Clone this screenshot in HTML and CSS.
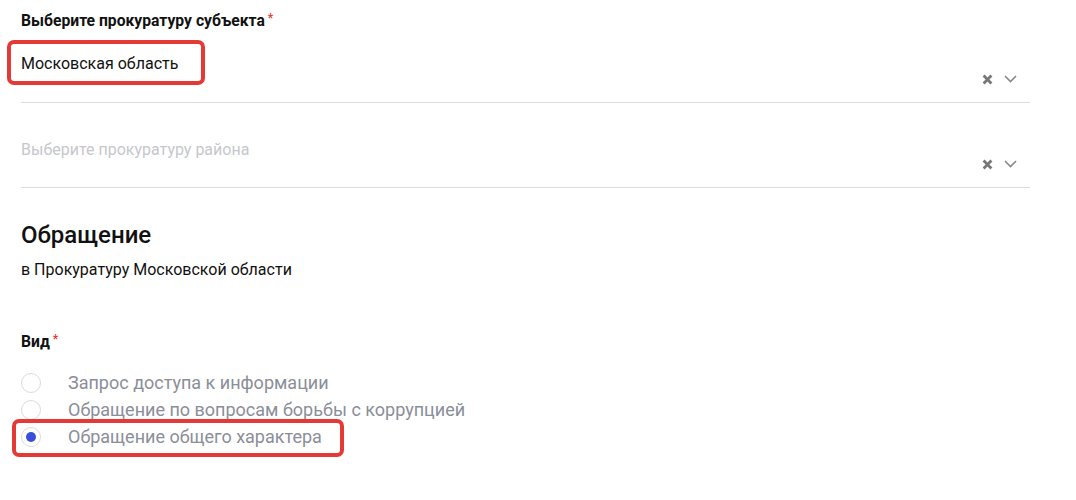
FILE: index.html
```html
<!DOCTYPE html>
<html lang="ru">
<head>
<meta charset="utf-8">
<link rel="stylesheet" href="styles.css">
</head>
<body>
<div class="form">
  <div class="label label-top">Выберите прокуратуру субъекта<span class="req">*</span></div>
  <div class="select select-first">
    <div class="select-value"><span class="value-text marked">Московская область</span></div>
    <div class="select-icons">
      <svg class="icon-clear" width="11" height="11" viewBox="0 0 11 11"><path d="M1.6 1.6 L9.4 9.4 M9.4 1.6 L1.6 9.4" stroke="#777" stroke-width="2.8" stroke-linecap="butt"/></svg>
      <svg class="icon-chevron" width="13" height="8" viewBox="0 0 13 8"><path d="M1 1 L6.5 6.5 L12 1" fill="none" stroke="#888" stroke-width="1.6"/></svg>
    </div>
  </div>
  <div class="select select-second">
    <div class="select-value"><span class="placeholder">Выберите прокуратуру района</span></div>
    <div class="select-icons">
      <svg class="icon-clear" width="11" height="11" viewBox="0 0 11 11"><path d="M1.6 1.6 L9.4 9.4 M9.4 1.6 L1.6 9.4" stroke="#777" stroke-width="2.8" stroke-linecap="butt"/></svg>
      <svg class="icon-chevron" width="13" height="8" viewBox="0 0 13 8"><path d="M1 1 L6.5 6.5 L12 1" fill="none" stroke="#888" stroke-width="1.6"/></svg>
    </div>
  </div>
  <h2 class="title">Обращение</h2>
  <p class="subtitle">в Прокуратуру Московской области</p>
  <div class="label label-kind">Вид<span class="req">*</span></div>
  <div class="radios">
    <div class="radio"><span class="circle"></span><span class="radio-text">Запрос доступа к информации</span></div>
    <div class="radio"><span class="circle"></span><span class="radio-text">Обращение по вопросам борьбы с коррупцией</span></div>
    <div class="radio radio-checked marked-row"><span class="circle"><span class="dot"></span></span><span class="radio-text">Обращение общего характера</span></div>
  </div>
</div>
</body>
</html>
```
FILE: styles.css
```css
*, *::before, *::after { box-sizing: border-box; }
html, body { margin: 0; padding: 0; background: #fff; }
body { font-family: Roboto, "Liberation Sans", Arial, sans-serif; color: #111; }

.form {
  width: 1030px;
  padding: 11px 0 43px 21px;
}

.label {
  font-size: 15.7px;
  line-height: 20px;
  font-weight: 700;
  color: #111;
  position: relative;
}
.req {
  color: #e53935;
  font-size: 12px;
  font-weight: 700;
  vertical-align: top;
  position: relative;
  top: -3px;
  margin-left: 3px;
}

.select {
  display: flex;
  align-items: flex-end;
  justify-content: space-between;
  border-bottom: 1px solid #dcdcdc;
  padding: 23px 13px 17px 0;
}
.select-second {
  margin-top: 13px;
  padding-top: 24px;
}
.select-value {
  padding-bottom: 11px;
  font-size: 16px;
  line-height: 20px;
}
.select-second .select-value { padding-bottom: 10px; }
.value-text { color: #111; position: relative; display: inline-block; }
.placeholder { color: #c6c7cc; font-size: 16px; }

.select-icons {
  display: flex;
  align-items: center;
  gap: 11px;
  height: 12px;
}
.icon-clear, .icon-chevron { display: block; }

.marked::after {
  content: "";
  position: absolute;
  left: -14px;
  top: -14px;
  width: 198px;
  height: 45px;
  border: 4px solid #e53935;
  border-radius: 7px;
}

.title {
  margin: 33px 0 0;
  font-size: 24px;
  line-height: 28px;
  font-weight: 500;
  color: #111;
}
.subtitle {
  margin: 11px 0 0;
  font-size: 16px;
  line-height: 20px;
  color: #111;
}

.label-kind { margin-top: 52px; }

.radios { margin-top: 17px; }
.radio {
  display: flex;
  align-items: center;
  height: 27px;
  position: relative;
}
.circle {
  width: 20px;
  height: 20px;
  border: 1px solid #dcdcdc;
  border-radius: 50%;
  display: flex;
  align-items: center;
  justify-content: center;
  flex: none;
  background: #fff;
}
.dot {
  width: 10px;
  height: 10px;
  border-radius: 50%;
  background: #3a4fd9;
}
.radio-text {
  margin-left: 27px;
  font-size: 18px;
  line-height: 22px;
  color: #8b8e99;
}
.marked-row::after {
  content: "";
  position: absolute;
  left: -9px;
  top: -4px;
  width: 332px;
  height: 38px;
  border: 4px solid #e53935;
  border-radius: 7px;
}
```
